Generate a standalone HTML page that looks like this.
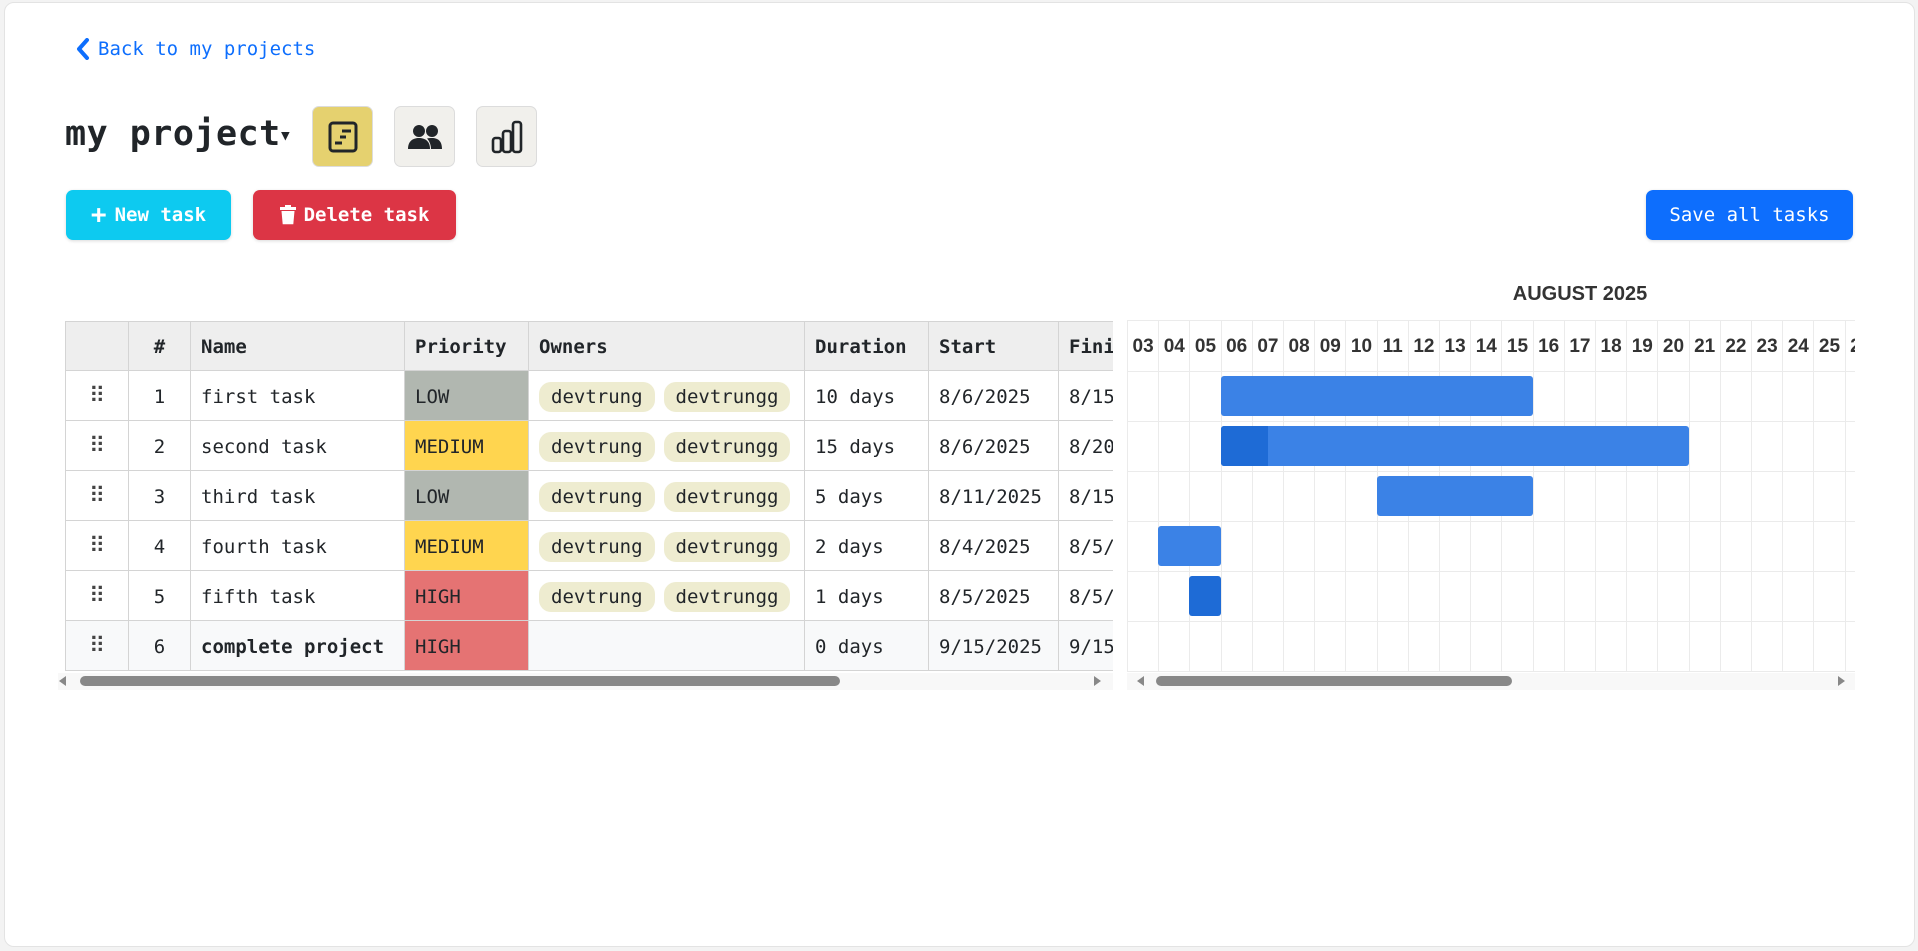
<!DOCTYPE html>
<html><head><meta charset="utf-8"><style>
*{box-sizing:border-box;margin:0;padding:0}
body{width:1918px;height:951px;background:#f3f3f3;font-family:"DejaVu Sans Mono","Liberation Mono",monospace;color:#212529;position:relative;overflow:hidden}
.card{position:absolute;left:4px;top:2px;width:1911px;height:945px;background:#fff;border:1px solid #e3e3e3;border-radius:10px}
.abs{position:absolute}
.back{left:76px;top:38px;color:#0d6efd;font-size:19px;display:flex;align-items:center;gap:8px}
.title{left:65px;top:114px;font-size:35px;font-weight:bold;letter-spacing:0.5px}
.ib{width:61px;height:61px;border-radius:7px;border:1px solid #dcdcdc;display:flex;align-items:center;justify-content:center}
.btn{height:50px;border-radius:7px;color:#fff;font-size:19px;display:flex;align-items:center;justify-content:center;gap:8px;box-shadow:0 1px 3px rgba(0,0,0,.15)}
table{border-collapse:collapse;font-size:19px;table-layout:fixed}
td,th{border:1px solid #d4d4d4;height:50px;padding:2px 10px 0;white-space:nowrap;overflow:hidden;text-align:left}
th{background:#eeeeee;font-weight:bold;height:49px}
.c{text-align:center}
.low{background:#b1b7b0}.med{background:#ffd54f}.high{background:#e57373}
.chip{display:inline-block;background:#eeecd0;border-radius:12px;padding:2px 12px;margin-right:9px;line-height:26px}
.dots{font-size:22px;color:#444}
.tw{left:65px;top:321px;width:1048px;height:352px;overflow:hidden}
.g{left:1127px;top:320px;width:728px;height:352px;overflow:hidden}
.day{position:absolute;top:0;height:51px;width:31.2px;border-left:1px solid #ebebeb;font-family:"Liberation Sans Narrow","Liberation Sans",sans-serif;font-weight:bold;font-size:19px;color:#333;text-align:center;line-height:53px}
.bar{position:absolute;height:40px;background:#3b82e6;border-radius:3px}
</style></head><body>
<div class="card"></div>
<div class="abs back"><svg width="14" height="22" viewBox="0 0 14 22"><path d="M11 2 L3 11 L11 20" stroke="#0d6efd" stroke-width="4" fill="none" stroke-linecap="round" stroke-linejoin="round"/></svg>Back to my projects</div>
<div class="abs title">my project<span style="font-size:22px;vertical-align:middle;margin-left:-2px">▾</span></div>
<div class="abs ib" style="left:312px;top:106px;background:#e5d16f"><svg width="30" height="32" viewBox="0 0 30 32"><rect x="2" y="2" width="26" height="28" rx="3" fill="none" stroke="#212529" stroke-width="3"/><path d="M14 10h9M12 16h6M7 22h7" stroke="#212529" stroke-width="3"/></svg></div>
<div class="abs ib" style="left:394px;top:106px;background:#f1f0ec"><svg width="36" height="28" viewBox="0 0 36 28"><circle cx="12" cy="8" r="6" fill="#212529"/><circle cx="25" cy="8" r="6" fill="#212529"/><path d="M1 26c0-8 5-11 11-11s11 3 11 11z" fill="#212529"/><path d="M20 15.5c1.5-.4 3-.5 5-.5 6 0 10 3 10 11H24c0-4-1.5-8-4-10.5z" fill="#212529"/></svg></div>
<div class="abs ib" style="left:476px;top:106px;background:#f1f0ec"><svg width="32" height="34" viewBox="0 0 32 34"><rect x="2" y="18" width="8" height="14" rx="2.5" fill="none" stroke="#212529" stroke-width="2.6"/><rect x="12" y="11" width="8" height="21" rx="2.5" fill="none" stroke="#212529" stroke-width="2.6"/><rect x="22" y="2" width="8" height="30" rx="2.5" fill="none" stroke="#212529" stroke-width="2.6"/></svg></div>
<div class="abs btn" style="left:66px;top:190px;width:165px;background:#0dcaf0;font-weight:bold"><span style="font-size:26px;font-weight:bold">+</span>New task</div>
<div class="abs btn" style="left:253px;top:190px;width:203px;background:#dc3545;font-weight:bold"><svg width="16" height="20" viewBox="0 0 16 20"><rect x="0" y="2" width="16" height="3" fill="#fff"/><rect x="5" y="0" width="6" height="3" fill="#fff"/><path d="M1.5 6h13l-1.2 13.2H2.7z" fill="#fff"/></svg>Delete task</div>
<div class="abs btn" style="left:1646px;top:190px;width:207px;background:#0d6efd">Save all tasks</div>

<div class="abs tw"><table style="width:1140px">
<colgroup><col style="width:63px"><col style="width:62px"><col style="width:214px"><col style="width:124px"><col style="width:276px"><col style="width:124px"><col style="width:130px"><col style="width:147px"></colgroup>
<tr><th></th><th class="c">#</th><th>Name</th><th>Priority</th><th>Owners</th><th>Duration</th><th>Start</th><th>Finish</th></tr>
<tr><td class="c dots">⠿</td><td class="c">1</td><td>first task</td><td class="low">LOW</td><td><span class="chip">devtrung</span><span class="chip">devtrungg</span></td><td>10 days</td><td>8/6/2025</td><td>8/15/2025</td></tr>
<tr><td class="c dots">⠿</td><td class="c">2</td><td>second task</td><td class="med">MEDIUM</td><td><span class="chip">devtrung</span><span class="chip">devtrungg</span></td><td>15 days</td><td>8/6/2025</td><td>8/20/2025</td></tr>
<tr><td class="c dots">⠿</td><td class="c">3</td><td>third task</td><td class="low">LOW</td><td><span class="chip">devtrung</span><span class="chip">devtrungg</span></td><td>5 days</td><td>8/11/2025</td><td>8/15/2025</td></tr>
<tr><td class="c dots">⠿</td><td class="c">4</td><td>fourth task</td><td class="med">MEDIUM</td><td><span class="chip">devtrung</span><span class="chip">devtrungg</span></td><td>2 days</td><td>8/4/2025</td><td>8/5/2025</td></tr>
<tr><td class="c dots">⠿</td><td class="c">5</td><td>fifth task</td><td class="high">HIGH</td><td><span class="chip">devtrung</span><span class="chip">devtrungg</span></td><td>1 days</td><td>8/5/2025</td><td>8/5/2025</td></tr>
<tr style="background:#f8f9fa"><td class="c dots">⠿</td><td class="c">6</td><td style="font-weight:bold">complete project</td><td class="high">HIGH</td><td></td><td>0 days</td><td>9/15/2025</td><td>9/15/2025</td></tr>
</table></div>
<div class="abs" style="left:58px;top:673px;width:1055px;height:17px;background:#f8f8f8"></div>
<div class="abs" style="left:80px;top:676px;width:760px;height:10px;background:#888;border-radius:5px"></div>
<div class="abs" style="left:59px;top:676px;width:0;height:0;border-top:5px solid transparent;border-bottom:5px solid transparent;border-right:7px solid #888"></div>
<div class="abs" style="left:1094px;top:676px;width:0;height:0;border-top:5px solid transparent;border-bottom:5px solid transparent;border-left:7px solid #888"></div>

<div class="abs" style="left:1400px;top:283px;width:360px;text-align:center;font-family:'Liberation Sans Narrow','Liberation Sans',sans-serif;font-weight:bold;font-size:20px;color:#333">AUGUST 2025</div>
<div class="abs g" id="g">
<div style="position:absolute;left:0;top:0;right:0;height:1px;background:#ebebeb"></div>
</div>
<div class="abs" style="left:1127px;top:673px;width:728px;height:17px;background:#f8f8f8"></div>
<div class="abs" style="left:1156px;top:676px;width:356px;height:10px;background:#888;border-radius:5px"></div>
<div class="abs" style="left:1137px;top:676px;width:0;height:0;border-top:5px solid transparent;border-bottom:5px solid transparent;border-right:7px solid #888"></div>
<div class="abs" style="left:1838px;top:676px;width:0;height:0;border-top:5px solid transparent;border-bottom:5px solid transparent;border-left:7px solid #888"></div>
<script>
var g=document.getElementById('g'),h='';
for(var i=0;i<24;i++){var d=i+3;h+='<div class="day" style="left:'+(i*31.2)+'px">'+(d<10?'0'+d:d)+'</div>';
h+='<div style="position:absolute;left:'+(i*31.2)+'px;top:51px;width:1px;height:301px;background:#ebebeb"></div>';}
for(var r=0;r<7;r++){h+='<div style="position:absolute;left:0;right:0;top:'+(51+r*50)+'px;height:1px;background:#ebebeb"></div>';}
function bar(r,a,b,c){return '<div class="bar" style="top:'+(56+r*50)+'px;left:'+(a*31.2)+'px;width:'+((b-a)*31.2)+'px;'+(c||'')+'"></div>';}
h+=bar(0,3,13);h+=bar(1,3,18);
h+='<div style="position:absolute;top:106px;left:93.6px;width:47px;height:40px;background:#1e6bd6;border-radius:3px 0 0 3px"></div>';
h+=bar(2,8,13);h+=bar(3,1,3);h+=bar(4,2,3,'background:#1e6bd6');
g.innerHTML+=h;
</script>
</body></html>
